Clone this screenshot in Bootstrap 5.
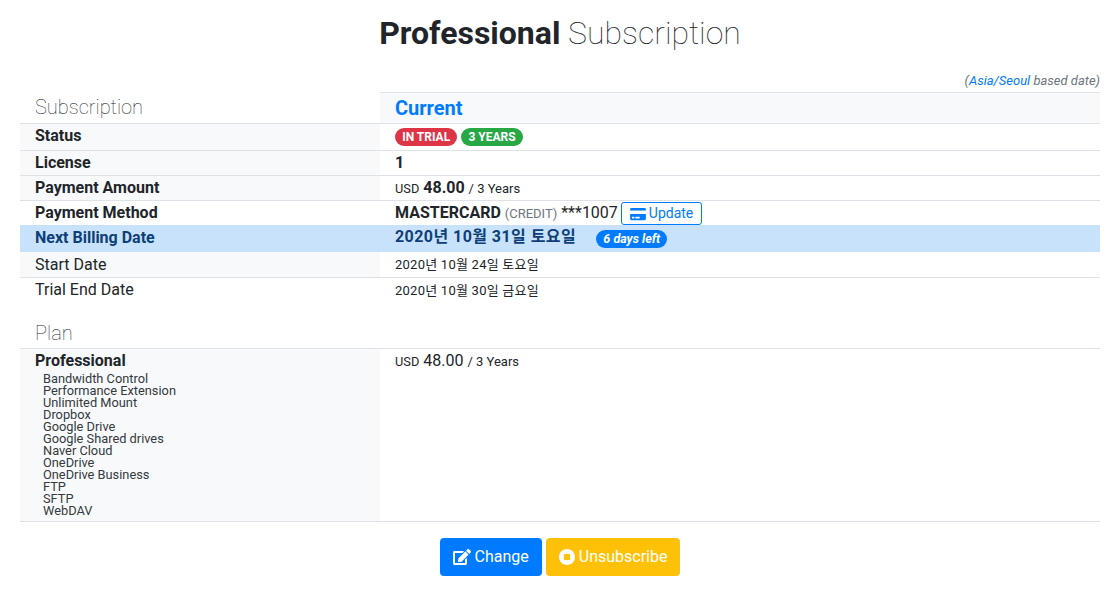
<!DOCTYPE html>
<html lang="en"><head><meta charset="utf-8">
<link href="https://cdn.jsdelivr.net/npm/bootstrap@5.3.0/dist/css/bootstrap.min.css" rel="stylesheet">
<style>
body{font-family:Roboto,"Noto Sans CJK KR",sans-serif;color:#212529;background:#fff;font-size:16px;line-height:1.5}
.wrap-page{padding:0 18px 0 20px}
.page-title{font-size:32px;font-weight:100;text-align:center;line-height:38px;margin:14px 0 0;color:#212529}
.page-title b{font-weight:700}
.tz-note{font-size:13px;font-style:italic;text-align:right;color:#6c757d;line-height:20px;margin-top:19px;height:21px}
.tz-note a{text-decoration:none;color:#007bff}
.plan-table{width:100%;table-layout:fixed;border-collapse:collapse;margin:0}
.plan-table td{padding:0 15px;vertical-align:middle}
.plan-table .c1{width:360px}
.r-sub{height:31px}
.r-sub td{border-bottom:1px solid #dee2e6}
.r-sub .cur-cell{border-top:1px solid #dee2e6;background:#f8f9fa;color:#007bff;font-size:20px;font-weight:700;line-height:28px;padding-bottom:1px}
.plan-table td.sec-label{font-size:20px;font-weight:100;color:#212529;padding-bottom:2px;line-height:26px}
.r td{border-bottom:1px solid #dee2e6}
.plan-table td.shade{background:#f8f9fa}
.h27{height:27px}.h25{height:25px}.h24{height:24px}.h-hl{height:27px}
.plan-table tr.up td.lab{padding-bottom:2px;line-height:22px}
.plan-table tr.h24 td.lab{padding-bottom:0}
.plan-table td.lab,.lab{font-weight:700}
.pill{display:inline-block;font-size:12px;font-weight:700;color:#fff;border-radius:10px;padding:0 7.2px;line-height:18px;vertical-align:1px}
.pill-red{background:#dc3545}.pill-green{background:#28a745}
.pill-blue{background:#007bff;font-size:12.5px;font-style:italic;margin-left:16px;vertical-align:0}
.tiny{font-size:12.8px}
.note{font-size:13px}
.amt{font-weight:700}
.grey{font-size:13px;color:#6c757d}
.pay-line{height:24px}
.pay-text{line-height:22px}
.upd{display:inline-flex;align-items:center;gap:3px;height:23px;padding:0 8px;font-size:14px;color:#007bff;border:1px solid #007bff;border-radius:3px;background:#fff;margin:1px 0 0 -1px}
.hl td{background:#c8e2fc;color:#0d3f78}
.plan-table td.dt{font-size:13px;letter-spacing:.24px;padding-top:1px}
.plan-table td.st-lab{padding-top:1px;line-height:23px}
.plan-table .hl .dd{letter-spacing:.44px;vertical-align:1px}
.gap-row{height:46px}
.plan-table .gap-row td{vertical-align:bottom;border-bottom:1px solid #dee2e6}
.plan-table .gap-row td.sec-label{line-height:24px;padding-bottom:3px}
.plan-row{border-bottom:1px solid #dee2e6}
.plan-table .plan-row td{vertical-align:top;padding-top:0}
.feat{font-size:12.8px;line-height:12px;padding-left:8px;color:#343a40;padding-bottom:4px}
.act{margin-top:16px}
.act .btn{font-size:16px;height:38px;padding:0 13px;gap:4px;color:#fff;border:0;border-radius:4px}
.btn-c{background:#007bff}.btn-u{background:#ffc107}
.ico{fill:currentColor;flex:none}
</style></head><body>
<div class="wrap-page">
<h1 class="page-title"><b>Professional</b> Subscription</h1>
<div class="tz-note">(<a href="#">Asia/Seoul</a> based date)</div>
<table class="plan-table">
<colgroup><col class="c1"><col></colgroup>
<tr class="r-sub"><td class="sec-label">Subscription</td><td class="cur-cell">Current</td></tr>
<tr class="r h27 up"><td class="lab shade">Status</td><td><span class="pill pill-red">IN TRIAL</span> <span class="pill pill-green">3 YEARS</span></td></tr>
<tr class="r h25"><td class="lab shade">License</td><td class="lab">1</td></tr>
<tr class="r h25"><td class="lab shade">Payment Amount</td><td><span class="tiny">USD</span> <span class="amt">48.00</span> <span class="note">/ 3 Years</span></td></tr>
<tr class="h24 up"><td class="lab">Payment Method</td><td><div class="pay-line d-flex align-items-center gap-1"><span class="pay-text"><span class="amt">MASTERCARD</span> <span class="grey">(CREDIT)</span> ***1007</span><span class="upd"><svg class="ico" width="16" height="14" viewBox="0 0 576 512"><path d="M0 432c0 26.500 21.500 48 48 48h480c26.500 0 48-21.500 48-48V256H0v176zm192-68c0-6.600 5.400-12 12-12h136c6.600 0 12 5.400 12 12v40c0 6.600-5.400 12-12 12H204c-6.600 0-12-5.400-12-12v-40zm-128 0c0-6.600 5.400-12 12-12h72c6.600 0 12 5.400 12 12v40c0 6.600-5.400 12-12 12H76c-6.600 0-12-5.400-12-12v-40zM576 80v48H0V80c0-26.500 21.500-48 48-48h480c26.500 0 48 21.500 48 48z"/></svg>Update</span></div></td></tr>
<tr class="hl h-hl up"><td class="lab">Next Billing Date</td><td class="lab"><span class="dd">2020년 10월 31일 토요일</span> <span class="pill pill-blue">6 days left</span></td></tr>
<tr class="r h25"><td class="shade st-lab">Start Date</td><td class="dt">2020년 10월 24일 토요일</td></tr>
<tr class="h25 tail"><td>Trial End Date</td><td class="dt">2020년 10월 30일 금요일</td></tr>
<tr class="gap-row"><td class="sec-label">Plan</td><td></td></tr>
<tr class="plan-row"><td class="shade"><div class="lab">Professional</div><div class="feat">Bandwidth Control<br>Performance Extension<br>Unlimited Mount<br>Dropbox<br>Google Drive<br>Google Shared drives<br>Naver Cloud<br>OneDrive<br>OneDrive Business<br>FTP<br>SFTP<br>WebDAV</div></td><td><span class="tiny">USD</span> 48.00 <span class="note">/ 3 Years</span></td></tr>
</table>
<div class="act d-flex justify-content-center gap-1"><a class="btn btn-c d-inline-flex align-items-center" href="#"><svg class="ico" width="18" height="16" viewBox="0 0 576 512"><path d="M402.600 83.200l90.200 90.200c3.800 3.800 3.800 10 0 13.800L274.400 405.600l-92.800 10.300c-12.400 1.400-22.900-9.100-21.500-21.500l10.300-92.800L388.800 83.200c3.800-3.800 10-3.800 13.800 0zm162-22.900l-48.800-48.800c-15.200-15.200-39.900-15.200-55.200 0l-35.400 35.400c-3.800 3.800-3.800 10 0 13.800l90.200 90.200c3.800 3.800 10 3.800 13.800 0l35.400-35.400c15.200-15.300 15.200-40 0-55.200zM384 346.200V448H64V128h229.800c3.200 0 6.200-1.300 8.500-3.500l40-40c7.600-7.600 2.200-20.500-8.500-20.500H48C21.500 64 0 85.500 0 112v352c0 26.500 21.500 48 48 48h352c26.500 0 48-21.500 48-48V306.200c0-10.700-12.900-16-20.500-8.500l-40 40c-2.200 2.300-3.500 5.300-3.500 8.500z"/></svg>Change</a><a class="btn btn-u d-inline-flex align-items-center" href="#"><svg class="ico" width="16" height="16" viewBox="8 8 496 496"><path d="M256 8C119 8 8 119 8 256s111 248 248 248 248-111 248-248S393 8 256 8zm96 328c0 8.800-7.200 16-16 16H176c-8.800 0-16-7.200-16-16V176c0-8.800 7.200-16 16-16h160c8.800 0 16 7.200 16 16v160z"/></svg>Unsubscribe</a></div>
</div>
<script src="https://cdn.jsdelivr.net/npm/bootstrap@5.3.0/dist/js/bootstrap.bundle.min.js"></script>
</body></html>
